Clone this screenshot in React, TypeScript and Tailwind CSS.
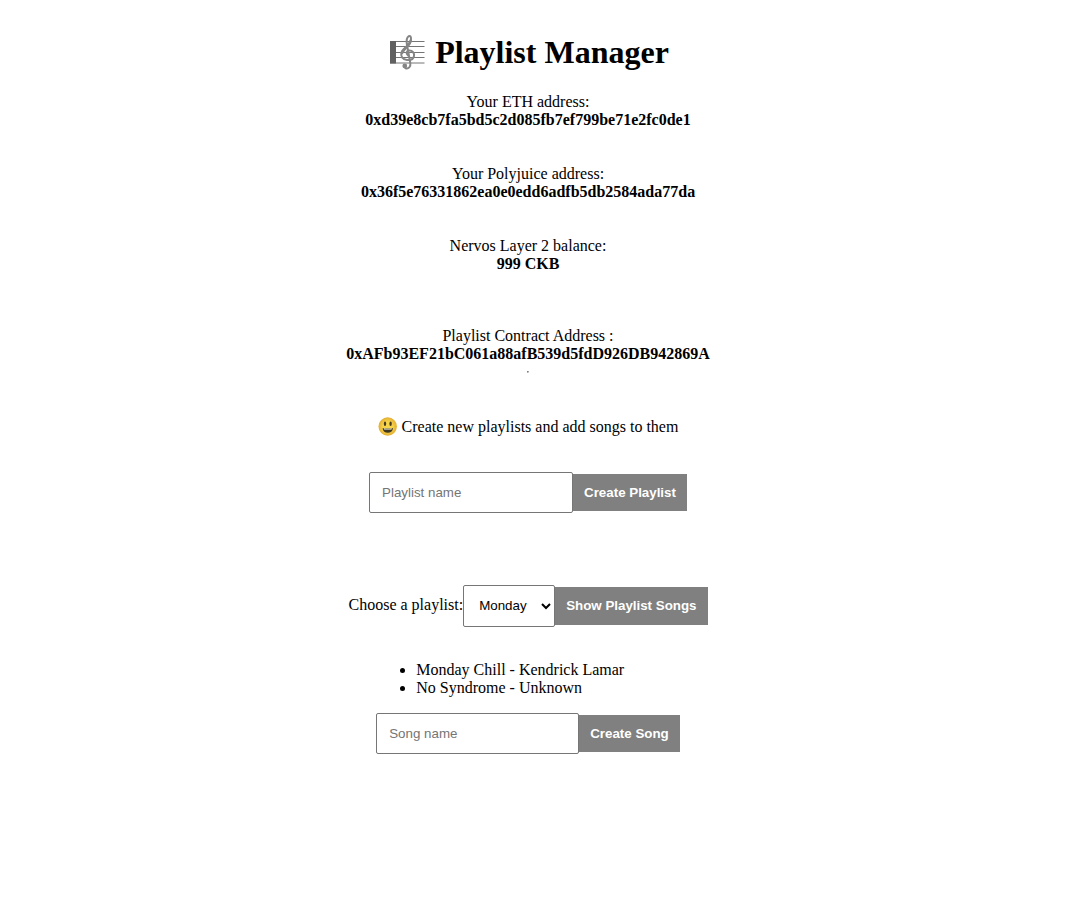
import React from "react";

const accounts = [
  { label: "Your ETH address:", value: "0xd39e8cb7fa5bd5c2d085fb7ef799be71e2fc0de1" },
  { label: "Your Polyjuice address:", value: "0x36f5e76331862ea0e0edd6adfb5db2584ada77da" },
  { label: "Nervos Layer 2 balance:", value: "999 CKB" },
];

const songs = ["Monday Chill - Kendrick Lamar", "No Syndrome - Unknown"];

const buttonClass =
  "bg-[#808080] px-[11px] [font-size:revert] leading-[15px] font-bold text-white font-['Liberation_Sans',Arial,sans-serif]";
const fieldClass =
  "rounded-[2px] border border-[#767676] bg-white p-3 [font-size:revert] leading-[15px] text-black placeholder:text-[#757575] font-['Liberation_Sans',Arial,sans-serif]";

function ScoreIcon() {
  return (
    <svg viewBox="-1 0 38 38" className="mr-[10px] size-[38px]" aria-hidden="true">
      <path d="M2 8.500H36.500M2 13.500H36.500M2 19.500H36.500M2 24.500H36.500M2 30H36.500" stroke="#757575" strokeWidth="1" fill="none" />
      <path d="M2 8h6v22.500H2z" fill="#616161" />
      <g fill="none" stroke="#858585" strokeLinecap="round">
        <path d="M20 22.500C17.500 20.500 18.500 17.500 21.500 17.500C24.500 17.500 26.500 20 26 23C25.500 26 22.500 27.300 19 27C14.500 26.500 12.300 23 13.500 19.500C15 15 22.500 12 23 6.500C23.200 3.500 22 2.500 20.800 3.200C18.500 4.600 18.300 8 19 12L22.300 30C23 34 20.500 36 17.500 35.200" strokeWidth="2" />
        <path d="M14 20C15.500 16 22 12.500 22.700 7.500" strokeWidth="2.600" />
      </g>
      <circle cx="16.800" cy="33" r="2.400" fill="#858585" />
    </svg>
  );
}

function SmileIcon() {
  return (
    <svg viewBox="0 0 20 20" className="mr-1 size-5" aria-hidden="true">
      <defs>
        <radialGradient id="face">
          <stop offset="0.5" stopColor="#f7d54a" />
          <stop offset="1" stopColor="#e3ae32" />
        </radialGradient>
      </defs>
      <circle cx="9.700" cy="9.500" r="9.200" fill="url(#face)" />
      <ellipse cx="7" cy="6.800" rx="1.200" ry="2.200" fill="#453b24" />
      <ellipse cx="12.600" cy="6.800" rx="1.200" ry="2.200" fill="#453b24" />
      <path d="M4.600 10.900Q9.800 12.200 15 10.900C14.700 14.200 12.500 15.700 9.800 15.700S4.900 14.200 4.600 10.900Z" fill="#3f3820" />
      <path d="M5.700 11.300Q9.800 12.300 13.900 11.300L13.500 12.500H6.100Z" fill="#fff" />
    </svg>
  );
}

export default function App() {
  return (
    <main className="flex flex-col items-center pt-[34px] pr-[35px] pb-8 text-base leading-[18px] text-black font-['Liberation_Serif','Times_New_Roman',serif]">
      <h1 className="flex h-9 items-center text-[32px] leading-9 font-bold">
        <ScoreIcon />
        Playlist Manager
      </h1>
      <dl className="mt-[23px] flex flex-col items-center gap-9 text-center">
        {accounts.map((a) => (
          <div key={a.label}>
            <dt>{a.label}</dt>
            <dd className="font-bold">{a.value}</dd>
          </div>
        ))}
      </dl>
      <dl className="mt-[54px] text-center">
        <dt>Playlist Contract Address :</dt>
        <dd className="font-bold">0xAFb93EF21bC061a88afB539d5fdD926DB942869A</dd>
      </dl>
      <hr className="mt-2 w-[2px] border border-t-[#808080] border-r-[#c8c8c8] border-b-[#e0e0e0] border-l-[#808080]" />
      <p className="mt-11 flex h-5 items-center">
        <SmileIcon />
        Create new playlists and add songs to them
      </p>
      <form className="mt-[35px] flex items-center" onSubmit={(e) => e.preventDefault()}>
        <input aria-label="Playlist name" placeholder="Playlist name" className={fieldClass + " w-[204px]"} />
        <button className={buttonClass + " py-[11px]"}>Create Playlist</button>
      </form>
      <form className="mt-[72px] flex items-center" onSubmit={(e) => e.preventDefault()}>
        <label htmlFor="playlist" className="pb-[2px]">Choose a playlist:</label>
        <select
          id="playlist"
          className="h-[42px] w-[92px] rounded-[2px] border border-[#767676] bg-white px-[11px] pb-[2px] [font-size:revert] font-['Liberation_Sans',Arial,sans-serif]"
        >
          <option>Monday</option>
        </select>
        <button className={buttonClass + " pt-[11px] pb-3"}>Show Playlist Songs</button>
      </form>
      <section className="mt-[34px]">
        <ul className="list-disc pl-10">
          {songs.map((s) => (
            <li key={s}>{s}</li>
          ))}
        </ul>
        <form className="mt-4 flex items-center" onSubmit={(e) => e.preventDefault()}>
          <input aria-label="Song name" placeholder="Song name" className={fieldClass + " w-[203px]"} />
          <button className={buttonClass + " py-[11px]"}>Create Song</button>
        </form>
      </section>
    </main>
  );
}
